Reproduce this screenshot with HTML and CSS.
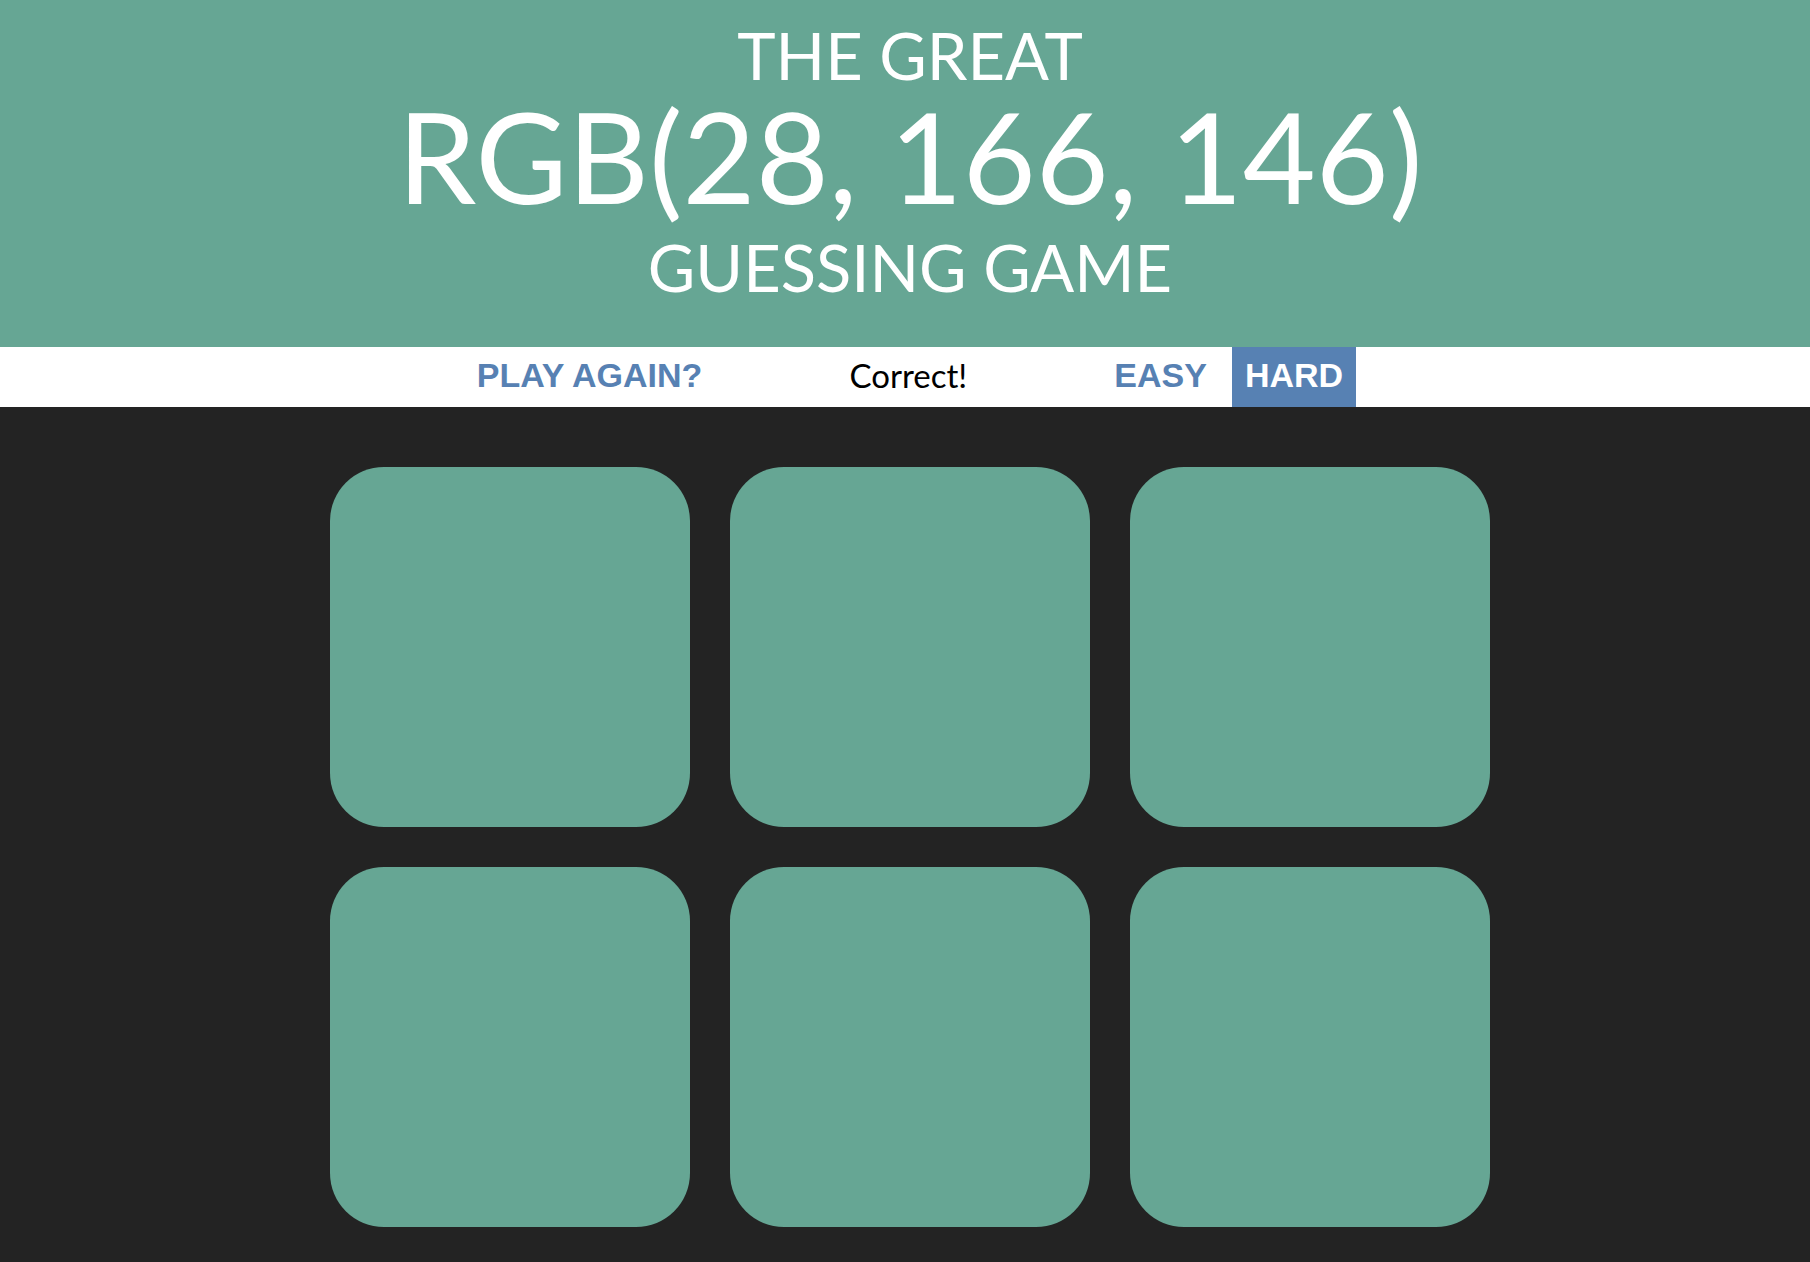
FILE: index.html
```html
<!DOCTYPE html>
<html>
<head>
<meta charset="utf-8">
<title>Color Game</title>
<link rel="stylesheet" href="styles.css">
</head>
<body>
<h1 class="header">
  <span class="line small">The Great</span>
  <span class="line big">RGB(28, 166, 146)</span>
  <span class="line small last">Guessing Game</span>
</h1>
<div class="stripe">
  <button class="btn reset">Play Again?</button>
  <span class="message">Correct!</span>
  <button class="btn mode">Easy</button>
  <button class="btn mode selected">Hard</button>
</div>
<div class="container">
  <div class="square"></div>
  <div class="square"></div>
  <div class="square"></div>
  <div class="square"></div>
  <div class="square"></div>
  <div class="square"></div>
</div>
</body>
</html>
```
FILE: styles.css
```css
html, body {
  margin: 0;
  padding: 0;
}
body {
  background: #232323;
  font-family: "Lato", "Liberation Sans", sans-serif;
  min-height: 1262px;
}
.header {
  margin: 0;
  padding: 19px 0 44px 10px;
  background: #66a694;
  color: #ffffff;
  font-weight: 400;
  text-align: center;
  text-transform: uppercase;
}
.line {
  display: block;
}
.small {
  font-size: 65px;
  line-height: 72px;
}
.big {
  font-size: 126px;
  line-height: 130px;
}
.last {
  margin-top: 10px;
}
.stripe {
  height: 60px;
  background: #ffffff;
  padding-left: 10px;
  display: flex;
  justify-content: center;
  align-items: stretch;
  gap: 12px;
}
.btn {
  border: none;
  background: none;
  margin: 0;
  padding: 0 13px 4px;
  height: 60px;
  font-family: "Liberation Sans", Arial, sans-serif;
  font-weight: 700;
  font-size: 34px;
  text-transform: uppercase;
  color: #5781b3;
  line-height: 56px;
}
.btn.selected {
  background: #5781b3;
  color: #ffffff;
}
.message {
  width: 362px;
  text-align: center;
  font-size: 33px;
  line-height: 56px;
  color: #000000;
}
.container {
  display: grid;
  grid-template-columns: repeat(3, 360px);
  grid-auto-rows: 360px;
  gap: 40px;
  justify-content: center;
  padding: 60px 0 0 10px;
}
.square {
  background: #66a694;
  border-radius: 15%;
}
```
